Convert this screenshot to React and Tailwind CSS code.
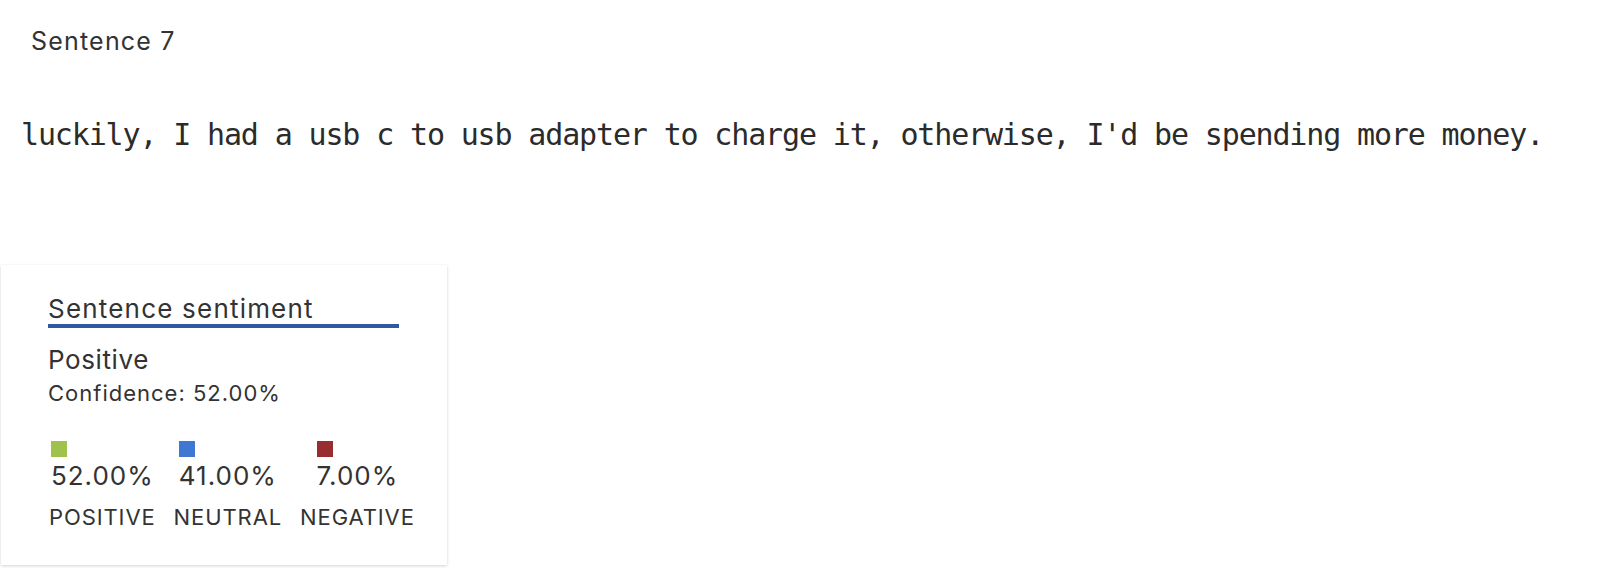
export default function App() {
  const items = [
    { color: "bg-[#a0c14b]", pct: "52.00%", label: "POSITIVE" },
    { color: "bg-[#3f77d2]", pct: "41.00%", label: "NEUTRAL" },
    { color: "bg-[#972d2e]", pct: "7.00%", label: "NEGATIVE" },
  ];
  return (
    <div className="w-[1622px] h-[568px] bg-white text-[#333333] font-['Inter',sans-serif] overflow-hidden">
      <div className="pl-[31px] pt-[25px] text-[25px] leading-[32px] tracking-[1.2px]">Sentence 7</div>
      <div className="pl-[21px] mt-[61px] font-['DejaVu_Sans_Mono',monospace] text-[30px] leading-[34px] tracking-[-1.15px] text-[#2b2b2b] whitespace-nowrap">
        luckily, I had a usb c to usb adapter to charge it, otherwise, I'd be spending more money.
      </div>
      <div className="mt-[113px] ml-[1px] w-[446px] h-[300px] bg-white shadow-[0_1px_3px_rgba(0,0,0,0.18)] pl-[47px] pt-[28px] flex flex-col">
        <div className="text-[26px] leading-[31px] tracking-[1.2px] w-fit">Sentence sentiment</div>
        <div className="h-[4px] w-[351px] bg-[#2e5b9f]"></div>
        <div className="mt-[16px] text-[26px] leading-[32px] tracking-[0.6px]">Positive</div>
        <div className="mt-[4px] text-[22px] leading-[26px] tracking-[1px]">Confidence: 52.00%</div>
        <div className="mt-[35px] ml-[1px] flex gap-[18px]">
          {items.map((it) => (
            <div key={it.label} className="flex flex-col items-center">
              <div className="flex flex-col items-start">
                <div className={`w-[16px] h-[16px] ${it.color}`}></div>
                <div className="mt-[3px] text-[26px] leading-[32px] tracking-[1px]">{it.pct}</div>
              </div>
              <div className="mt-[12px] text-[22px] leading-[26px] tracking-[0.9px]">{it.label}</div>
            </div>
          ))}
        </div>
      </div>
    </div>
  );
}
